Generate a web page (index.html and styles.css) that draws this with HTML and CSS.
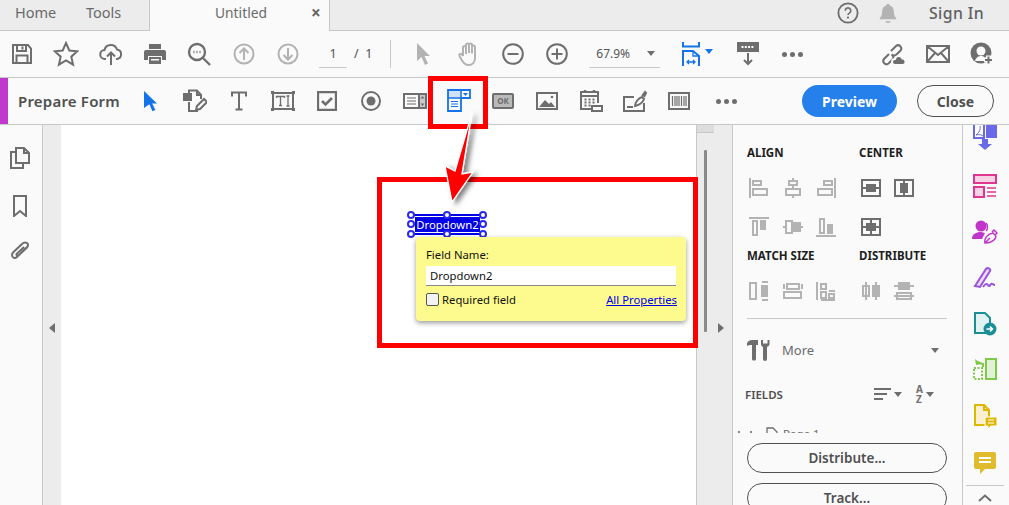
FILE: index.html
```html
<!DOCTYPE html>
<html lang="en">
<head>
<meta charset="utf-8">
<title>Prepare Form</title>
<link rel="stylesheet" href="styles.css">
</head>
<body>
<div class="app">
  <header class="tabs">
    <a class="tab">Home</a>
    <a class="tab tools">Tools</a>
    <div class="doc-tab"><span class="doc-name">Untitled</span><span class="doc-x">×</span></div>
    <div class="tabs-right">
      <svg class="help" width="22" height="22" viewBox="0 0 24 24"><circle cx="12" cy="12" r="10.500" fill="none" stroke="#6e6e6e" stroke-width="2"/><path d="M9 9.500a3 3 0 1 1 4.500 2.600c-1 .6-1.500 1.100-1.500 2.200" fill="none" stroke="#6e6e6e" stroke-width="1.800"/><circle cx="12" cy="17" r="1.200" fill="#6e6e6e"/></svg>
      <svg class="bell" width="20" height="22" viewBox="0 0 22 24"><path d="M11 2c1.200 0 2 .7 2 1.800 3.200 1 4.500 3.500 4.500 7 0 3.500 1 5.200 2.500 6.700v1.500H2v-1.500c1.500-1.500 2.500-3.200 2.500-6.700 0-3.500 1.300-6 4.500-7C9 2.700 9.800 2 11 2z" fill="#b3b3b3"/><path d="M8 21h6a3 2 0 0 1-6 0z" fill="#b3b3b3"/></svg>
      <span class="signin">Sign In</span>
    </div>
  </header>

  <nav class="toolbar">
    <div class="cell"><svg width="24" height="24" viewBox="0 0 24 24" class="ic"><path d="M3 3h15l3 3.500V21H3z"/><path d="M7 3v6h9V3M6.500 21v-7.500h11V21"/><path d="M12.500 4.500v3" /></svg></div>
    <div class="cell"><svg width="26" height="26" viewBox="0 0 26 26" class="ic"><path d="M13 2l3.300 7.500 8 .8-6 5.400 1.800 8L13 19.500l-7.100 4.200 1.800-8-6-5.400 8-.8z"/></svg></div>
    <div class="cell"><svg width="24" height="24" viewBox="0 0 24 24" class="ic"><path d="M7 17H6a4.500 4.500 0 0 1-.5-9A6.500 6.500 0 0 1 18 7.500a4.800 4.800 0 0 1 0 9.500h-1"/><path d="M12 23V11M8 14.500l4-4 4 4"/></svg></div>
    <div class="cell"><svg width="24" height="24" viewBox="0 0 24 24" class="icf"><path d="M6 2h12v5H6z"/><path d="M3 8h18a2 2 0 0 1 2 2v8h-4v-4H5v4H1v-8a2 2 0 0 1 2-2z"/><path d="M6 15h12v7H6zM8 17v1.500h8V17z" fill-rule="evenodd"/></svg></div>
    <div class="cell"><svg width="24" height="24" viewBox="0 0 24 24" class="ic ic-heavy"><circle cx="10" cy="10" r="8"/><path d="M16 16l7 7"/><path d="M6.500 10h1M9.500 10h1M12.500 10h1"/></svg></div>
    <div class="cell"><svg width="22" height="22" viewBox="0 0 22 22" class="ic dis"><circle cx="11" cy="11" r="9.500"/><path d="M11 17V5.500M6.500 10L11 5.500 15.500 10"/></svg></div>
    <div class="cell"><svg width="22" height="22" viewBox="0 0 22 22" class="ic dis"><circle cx="11" cy="11" r="9.500"/><path d="M11 5v11.500M6.500 12l4.500 4.500 4.500-4.500"/></svg></div>
    <div class="page-box"><span class="page-now">1</span><span class="page-of">/ &nbsp;1</span></div>
    <div class="sep"></div>
    <div class="cell"><svg width="18" height="24" viewBox="0 0 18 24" class="icf dis-f"><path d="M2 1l13 13H9.500l3.500 7.500-3 1.500-3.500-8L2 19z"/></svg></div>
    <div class="cell"><svg width="24" height="26" viewBox="0 0 24 26" class="ic dis"><path d="M6 15V6.500a1.500 1.500 0 0 1 3 0V13M9 12V4a1.500 1.500 0 0 1 3 0v8M12 12V4a1.500 1.500 0 0 1 3 0v8M15 12.500V6a1.500 1.500 0 0 1 3 0v11c0 4-2.500 7-6.500 7-3.500 0-5-2-6.500-4.500L2.500 15c-1-1.500 1-3 2.500-1.500L6 15"/></svg></div>
    <div class="cell"><svg width="22" height="22" viewBox="0 0 22 22" class="ic"><circle cx="11" cy="11" r="9.800"/><path d="M5.500 11h11"/></svg></div>
    <div class="cell"><svg width="22" height="22" viewBox="0 0 22 22" class="ic"><circle cx="11" cy="11" r="9.800"/><path d="M5.500 11h11M11 5.500v11"/></svg></div>
    <div class="zoom-box"><span>67.9%</span><i class="caret"></i></div>
    <div class="fit"><svg width="18" height="24" viewBox="0 0 18 24" class="ic blue"><path d="M1 0v4.500h16V0M1 24V9h10l6 5v10"/><path d="M11 9v5h6M5 20h8M7 18l-2 2 2 2M11 18l2 2-2 2" stroke-width="1.300"/></svg><i class="caret blue-caret"></i></div>
    <div class="cell dl"><svg width="24" height="24" viewBox="0 0 24 24" class="ic"><path d="M2 1h20v8H2z" fill="#6e6e6e"/><path d="M5.500 5h13" stroke="#fff" stroke-dasharray="2 1.300"/><path d="M12 11v11M8 18l4 4 4-4"/></svg></div>
    <div class="dots top-dots"><b></b><b></b><b></b></div>
    <div class="toolbar-right">
      <div class="cell"><svg width="26" height="24" viewBox="0 0 26 24" class="ic"><path d="M9 12l-5 5a3.200 3.200 0 0 0 4.500 4.500l4-4a3.200 3.200 0 0 0-1-5M11 9l5-5a3.200 3.200 0 0 1 4.500 4.500l-4 4a3.200 3.200 0 0 1-4 .5"/><path d="M15 23a3 3 0 0 1 0-6 4 4 0 0 1 7.500-.5 3.300 3.300 0 0 1 .5 6.500z" fill="#6e6e6e" stroke="#fafafa"/></svg></div>
      <div class="cell"><svg width="24" height="20" viewBox="0 0 24 20" class="ic"><path d="M1 2h22v16H1zM1 2l11 9 11-9M1 18l8-9M23 18l-8-9"/></svg></div>
      <div class="cell"><svg width="24" height="24" viewBox="0 0 24 24"><circle cx="11" cy="11" r="10.500" fill="#6e6e6e"/><circle cx="11" cy="9" r="4.500" fill="#fafafa"/><path d="M5 19c1-4 4-5 6-5s5 1 6 5" fill="#fafafa"/><path d="M14 18h9M18.500 13.500v9" stroke="#fafafa" stroke-width="5"/><path d="M15 18h7M18.500 14.500v7" stroke="#6e6e6e" stroke-width="2"/></svg></div>
    </div>
  </nav>

  <section class="formbar">
    <div class="formbar-accent"></div>
    <h1 class="formbar-title">Prepare Form</h1>
    <div class="formtools">
      <div class="tool"><svg width="16" height="22" viewBox="0 0 16 22"><path d="M1 1l13 12.500H9.200l3.200 6.500-3 1.300-3-7L1 18z" fill="#1473e6"/></svg></div>
      <div class="tool"><svg width="24" height="24" viewBox="0 0 24 24" class="ic"><path d="M6 5V1.500h8l4 4.500v4M6 13v9h9"/><path d="M14 1.500V6h4"/><path d="M1 5h7v6H1z" fill="#6e6e6e"/><path d="M13 21l1-4 7-7 3 3-7 7z"/></svg></div>
      <div class="tool"><svg width="18" height="20" viewBox="0 0 18 20" class="ic"><path d="M2 5.500V1.500h14v4M9 1.500V18.500M5.500 18.500h7"/></svg></div>
      <div class="tool"><svg width="24" height="20" viewBox="0 0 24 20" class="ic"><path d="M2 2h20v16H2z"/><path d="M5.500 7V5.500h8V7M9.500 5.500v9M8 14.500h3M15.500 5h3M17 5v10M15.500 15h3" stroke-width="1.300"/><path d="M0 0h3v3H0zM21 0h3v3h-3zM0 17h3v3H0zM21 17h3v3h-3z" fill="#6e6e6e" stroke="none"/></svg></div>
      <div class="tool"><svg width="20" height="20" viewBox="0 0 20 20" class="ic ic-heavy"><path d="M1 1h18v18H1z"/><path d="M5 10l3.500 3.500L15 7" stroke-width="2.600"/></svg></div>
      <div class="tool"><svg width="20" height="20" viewBox="0 0 20 20"><circle cx="10" cy="10" r="9" fill="none" stroke="#6e6e6e" stroke-width="2"/><circle cx="10" cy="10" r="4.500" fill="#6e6e6e"/></svg></div>
      <div class="tool"><svg width="24" height="16" viewBox="0 0 24 16" class="ic"><path d="M16 1h7v14h-7z" fill="#c9c9c9" stroke="none"/><path d="M1 1h22v14H1zM16 1v14"/><path d="M4 5h9M4 8h9M4 11h9" stroke-width="1.200"/><path d="M19.500 3l2 2.500h-4zM19.500 13l-2-2.500h4z" fill="#6e6e6e" stroke="none"/></svg></div>
      <div class="tool"><svg width="24" height="24" viewBox="0 0 24 24"><path d="M1 1h13v8H1z" fill="#cfe2f8"/><path d="M1 1h22v8H14v13H1z" fill="none" stroke="#1473e6" stroke-width="1.800"/><path d="M14 1v8M1 9h13" stroke="#1473e6" stroke-width="1.500" fill="none"/><path d="M16 4h5l-2.500 3z" fill="#1473e6"/><path d="M4 12.500h7M4 15h7M4 17.500h7" stroke="#1473e6" stroke-width="1.200"/></svg></div>
      <div class="tool"><span class="ok-btn">OK</span></div>
      <div class="tool"><svg width="22" height="18" viewBox="0 0 22 18"><path d="M1 1h20v16H1z" fill="none" stroke="#6e6e6e" stroke-width="2"/><path d="M3 15l6-7 4 4 2-2 4 5z" fill="#6e6e6e"/><circle cx="16" cy="5" r="1.300" fill="#6e6e6e"/></svg></div>
      <div class="tool"><svg width="24" height="24" viewBox="0 0 24 24" class="ic"><path d="M15 20H2V3h17v11"/><path d="M6 1v3M15 1v3" stroke-width="2.500"/><path d="M2 7h17" stroke-width="2"/><path d="M5.500 10.500h2M9.500 10.500h2M13.500 10.500h2M5.500 13.500h2M9.500 13.500h2M13.500 13.500h2M5.500 16.500h2M9.500 16.500h2" stroke-width="2"/><path d="M13 17h10v5H13z" fill="#fafafa"/></svg></div>
      <div class="tool"><svg width="24" height="22" viewBox="0 0 24 22" class="ic"><path d="M11 7H1v14h20V13"/><path d="M4 17h6"/><path d="M12 16c0-3 3-8 7-9l2 2c-1 3-5 6-9 7zM19 6l3-4 1 1-2 4" /></svg></div>
      <div class="tool"><svg width="22" height="18" viewBox="0 0 22 18"><path d="M1 1h20v16H1z" fill="none" stroke="#6e6e6e" stroke-width="2"/><path d="M4.500 4v10M7 4v10M9 4v10M11 4v10M13.500 4v10M16 4v10M18 4v10" stroke="#6e6e6e" stroke-width="1.200"/></svg></div>
      <div class="dots form-dots"><b></b><b></b><b></b></div>
    </div>
    <button class="btn-preview">Preview</button>
    <button class="btn-close">Close</button>
  </section>

  <main class="workspace">
    <aside class="leftrail">
      <svg width="20" height="22" viewBox="0 0 20 22" class="ic"><path d="M6 4V1h8l5 5v10h-5"/><path d="M14 1v5h5"/><path d="M6 5H1v16h12v-5"/><path d="M6 4v12h8" /></svg>
      <svg width="14" height="22" viewBox="0 0 14 22" class="ic"><path d="M1 1h12v20l-6-5-6 5z"/></svg>
      <svg class="clip" width="20" height="22" viewBox="0 0 20 22"><path d="M17 7L7 17c-2 2-5 1-5-2 0-1 .5-2 1.500-3L12 4c2-2 6-2 6 1 0 1-.5 2-1.500 3L9 15c-1 1-3 .5-2.500-1L14 7" fill="none" stroke="#6e6e6e" stroke-width="2"/></svg>
    </aside>
    <div class="gutter-left"><i class="tri-left"></i></div>
    <div class="doc"></div>
    <div class="gutter-right">
      <div class="scroll-cap"></div>
      <div class="scroll-thumb"></div>
      <i class="tri-right"></i>
    </div>
    <aside class="panel">
      <div class="tool-grid">
        <h2 class="hd c3">ALIGN</h2><h2 class="hd c2">CENTER</h2>
        <svg class="g" width="20" height="20" viewBox="0 0 20 20"><path d="M1 0v20M4 3h8v4H4zM4 11h14v6H4z"/></svg>
        <svg class="g" width="20" height="20" viewBox="0 0 20 20"><path d="M10 0v3M10 7v4M10 17v3M6 3h8v4H6zM3 11h14v6H3z"/></svg>
        <svg class="g" width="20" height="20" viewBox="0 0 20 20"><path d="M19 0v20M8 3h8v4H8zM2 11h14v6H2z"/></svg>
        <svg class="g on" width="20" height="18" viewBox="0 0 20 18"><path d="M1 1h18v16H1z"/><path d="M1 9h18M6 6h8v6H6z" fill="#6e6e6e"/></svg>
        <svg class="g on" width="20" height="18" viewBox="0 0 20 18"><path d="M1 1h18v16H1z"/><path d="M10 1v16M7 5h6v8H7z" fill="#6e6e6e"/></svg>
        <svg class="g" width="20" height="20" viewBox="0 0 20 20"><path d="M0 1h20M4 4h4v14H4zM12 4h4v8h-4z"/><path d="M12 4h4v8h-4z" fill="#b3b3b3"/></svg>
        <svg class="g" width="20" height="20" viewBox="0 0 20 20"><path d="M0 10h3M17 10h3M9 10h2M3 4h6v12H3zM11 6h6v8h-6z"/><path d="M11 6h6v8h-6z" fill="#b3b3b3"/></svg>
        <svg class="g" width="20" height="20" viewBox="0 0 20 20"><path d="M0 19h20M4 2h4v14H4zM12 8h4v8h-4z"/><path d="M12 8h4v8h-4z" fill="#b3b3b3"/></svg>
        <svg class="g on" width="20" height="18" viewBox="0 0 20 18"><path d="M1 1h18v16H1z"/><path d="M1 9h18M10 1v16M6 6h8v6H6z" fill="#6e6e6e"/></svg>
        <i class="g-empty"></i>
        <h2 class="hd c3 hd2">MATCH SIZE</h2><h2 class="hd c2 hd2">DISTRIBUTE</h2>
        <svg class="g" width="20" height="20" viewBox="0 0 20 20"><path d="M1 2h6v16H1zM13 1h6M13 19h6M13 5h5v10h-5z"/><path d="M13 5h5v10h-5z" fill="#b3b3b3"/></svg>
        <svg class="g" width="20" height="20" viewBox="0 0 20 20"><path d="M1 11h17v6H1zM1 3v5M19 3v5M4 3h12v5H4z"/></svg>
        <svg class="g" width="20" height="20" viewBox="0 0 20 20"><path d="M1 1v18M19 19H5M5 3h5v5H5zM5 11h5v6H5zM13 10h6M13 13h5v4h-5z"/></svg>
        <svg class="g" width="20" height="20" viewBox="0 0 20 20"><path d="M5 1v18M15 1v18M2 5h6v10H2zM12 5h6v10h-6z"/><path d="M12 5h6v10h-6z" fill="#b3b3b3"/></svg>
        <svg class="g" width="20" height="20" viewBox="0 0 20 20"><path d="M0 5h20M0 15h20M5 2h10v6H5zM3 12h14v6H3z"/><path d="M5 2h10v6H5z" fill="#b3b3b3"/></svg>
      </div>
      <div class="more-row">
        <svg width="24" height="22" viewBox="0 0 24 22"><path d="M0 4c1-2 3-3 5-3h6v5H9v14a1.500 1.500 0 0 1-1.500 1.500h-1A1.500 1.500 0 0 1 5 20V6C3 6 1 6 0 7z" fill="#6e6e6e"/><path d="M14 1v4c0 1.500 1 2.500 2 3v12a2 2 0 0 0 4 0V8c1-.5 2.500-1.500 2.500-3V1l-2 0v3.500h-4.500V1z" fill="#6e6e6e"/></svg>
        <span class="more-label">More</span>
        <i class="caret more-caret"></i>
      </div>
      <div class="fields-row">
        <span class="fields-title">FIELDS</span>
        <svg class="sort" width="18" height="14" viewBox="0 0 18 14"><path d="M0 2h17M0 7h13M0 12h9" stroke="#6e6e6e" stroke-width="1.800"/></svg><i class="caret sm"></i>
        <span class="az"><span class="az-l">A</span><span class="az-l">Z</span></span><i class="caret sm"></i>
      </div>
      <div class="tree"><span class="tree-tw"><i></i><i></i></span><svg width="12" height="14" viewBox="0 0 12 14"><path d="M1 1h6l4 4v8H1z" fill="none" stroke="#6e6e6e" stroke-width="1.300"/></svg><span>Page 1</span></div>
      <button class="pill">Distribute...</button>
      <button class="pill">Track...</button>
    </aside>
    <aside class="rightrail">
      <svg class="first" width="26" height="30" viewBox="0 0 26 30"><path d="M2 1h10v16H2z" fill="#fff" stroke="#6a6ae8" stroke-width="2"/><path d="M4 14c3-2 5-6 4-9M4 14c3-1 6 0 7 1" fill="none" stroke="#6a6ae8"/><path d="M14 0h11v17H14z" fill="#6a6ae8"/><path d="M10 18v5H6l7 6 7-6h-4v-5z" fill="#6a6ae8"/></svg>
      <svg width="24" height="24" viewBox="0 0 24 24"><path d="M1 1h22v8H1zM1 13h10v10H1z" fill="#f5d3e5" stroke="#e0368e" stroke-width="2"/><path d="M14 14h9M14 18h9M14 22h9" stroke="#e0368e" stroke-width="1.300"/></svg>
      <svg width="26" height="24" viewBox="0 0 26 24"><circle cx="9" cy="6" r="5.500" fill="#c035c9"/><path d="M0 19c0-5 4-7 9-7l4 1-3 6z" fill="#c035c9"/><path d="M14 3c2 2 2 6 0 8" fill="none" stroke="#c035c9" stroke-width="1.500"/><path d="M13 23c-1-4 2-9 8-10l3 3c0 3-4 7-11 7zM20 12l2-2 3 3-2 2M13 23l5-5" fill="none" stroke="#c035c9" stroke-width="1.500"/></svg>
      <svg width="24" height="24" viewBox="0 0 24 24"><path d="M2 20L13 3c2-2 5 0 4 2L7 21z" fill="#e9d8f7" stroke="#9b54dc" stroke-width="2"/><path d="M10 21c2-3 4-4 5-2 1 2 2 1 3-1 1-1 2 1 4 1" fill="none" stroke="#9b54dc" stroke-width="2"/></svg>
      <svg width="24" height="24" viewBox="0 0 24 24"><path d="M2 1h10l5 5v15H2z" fill="#e2f1f1" stroke="#1b8e96" stroke-width="2"/><circle cx="17" cy="17" r="6.500" fill="#1b8e96"/><path d="M13.500 17h6M17 14.500l2.500 2.500-2.500 2.500" stroke="#fff" stroke-width="1.500" fill="none"/></svg>
      <svg width="24" height="24" viewBox="0 0 24 24"><path d="M13 1h10v20H13z" fill="#e3f2d7" stroke="#7fc94a" stroke-width="2"/><path d="M1 10h8v11H1z" fill="none" stroke="#7fc94a" stroke-width="2" stroke-dasharray="2 1.500"/><path d="M2 1l1 6 6-1z" fill="#7fc94a"/><path d="M4 4l6 2v3" stroke="#7fc94a" stroke-width="2" fill="none"/></svg>
      <svg width="24" height="26" viewBox="0 0 24 26"><path d="M2 1h9l5 5v15H2z" fill="#faf0cf" stroke="#deb800" stroke-width="2"/><path d="M11 1v5h5" fill="none" stroke="#deb800" stroke-width="2"/><path d="M12 13h12v9h-6l-3 3v-3h-3z" fill="#deb800" stroke="#fff"/><path d="M15 16h6M15 19h6" stroke="#fff"/></svg>
      <svg width="22" height="22" viewBox="0 0 22 22"><path d="M2 0h18a2 2 0 0 1 2 2v13a2 2 0 0 1-2 2h-9l-5 5v-5H2a2 2 0 0 1-2-2V2a2 2 0 0 1 2-2z" fill="#e0bb2e"/><path d="M5 6h12M5 10h12" stroke="#fff" stroke-width="2"/></svg>
      <div class="rail-foot"><svg width="14" height="8" viewBox="0 0 14 8"><path d="M1 7l6-5.500L13 7" fill="none" stroke="#6e6e6e" stroke-width="2"/></svg></div>
    </aside>
  </main>

  <div class="redbox redbox-tool"></div>
  <div class="redbox redbox-field"></div>
  <svg class="arrow" width="60" height="110" viewBox="0 0 60 110"><defs><filter id="sh" x="-40%" y="-20%" width="200%" height="150%"><feDropShadow dx="4" dy="2" stdDeviation="2.500" flood-color="#000" flood-opacity=".5"/></filter></defs><path d="M41 3L31 64 42 62 21 92 14 56 24 61z" fill="#f00" stroke="#fff" stroke-width="1.300" filter="url(#sh)"/></svg>
  <div class="field"><span class="field-text">Dropdown2</span>
    <i class="h h1"></i><i class="h h2"></i><i class="h h3"></i><i class="h h4"></i><i class="h h5"></i><i class="h h6"></i><i class="h h7"></i><i class="h h8"></i>
  </div>
  <div class="popup">
    <label class="pop-label">Field Name:</label>
    <div class="pop-input">Dropdown2</div>
    <div class="pop-row"><span class="chk"></span><span>Required field</span><a class="pop-link">All Properties</a></div>
  </div>
</div>
</body>
</html>
```
FILE: styles.css
```css
* { box-sizing: border-box; }
html, body { margin: 0; padding: 0; }
body { width: 1009px; height: 505px; overflow: hidden; background: #fafafa; font-family: "Noto Sans", "Open Sans", sans-serif; color: #505050; }
.app { position: relative; width: 1009px; height: 505px; overflow: hidden; display: flex; flex-direction: column; }
svg { display: block; flex: none; }
.ic { fill: none; stroke: #6e6e6e; stroke-width: 2; }
.ic-heavy { stroke-width: 2.300; }
.icf { fill: #6e6e6e; }
.dis { stroke: #b3b3b3; }
.dis-f { fill: #b3b3b3; }
.blue { stroke: #1473e6; stroke-width: 2; }

.tabs { height: 31px; flex: none; display: flex; align-items: center; background: #ececec; border-bottom: 1px solid #c8c8c8; font-size: 14.500px; color: #6a6a6a; }
.tab { padding-left: 15px; width: 86px; flex: none; margin-top: -6px; }
.tab.tools { padding-left: 0; width: 63px; }
.doc-tab { width: 181px; height: 31px; background: #fafafa; border: 1px solid #c8c8c8; border-top: 0; border-bottom: 0; display: flex; align-items: center; flex: none; padding-bottom: 5px; }
.doc-name { margin-left: 65px; width: 96px; font-size: 13.800px; }
.doc-x { font-size: 17px; font-weight: 700; color: #666; line-height: 1; }
.tabs-right { margin-left: auto; display: flex; align-items: center; margin-top: -5px; }
.help { margin-right: 19px; }
.bell { margin-right: 31px; }
.signin { font-size: 15.800px; font-weight: 500; margin-right: 25px; letter-spacing: .4px; color: #606060; }

.toolbar { height: 47px; flex: none; display: flex; align-items: center; border-bottom: 1px solid #c8c8c8; background: #fafafa; }
.cell { width: 44.300px; height: 46px; flex: none; display: flex; align-items: center; justify-content: center; }
.page-box { width: 80px; flex: none; font-size: 12.500px; color: #505050; display: flex; }
.page-now { width: 28px; margin-left: 9px; text-align: center; height: 27px; line-height: 25px; border-bottom: 1px solid #c8c8c8; color: #555; }
.page-of { margin-left: 7px; line-height: 25px; }
.sep { width: 1px; height: 28px; background: #c8c8c8; margin-right: 11px; flex: none; }
.zoom-box { margin-left: 10px; width: 71px; height: 27px; border-bottom: 1px solid #c8c8c8; display: flex; align-items: center; font-size: 12px; color: #555; flex: none; padding-left: 7px; }
.caret { display: block; width: 0; height: 0; border-left: 4px solid transparent; border-right: 4px solid transparent; border-top: 5px solid #6e6e6e; flex: none; }
.zoom-box .caret { margin-left: 17px; }
.fit { display: flex; align-items: center; margin-left: 22px; width: 36px; flex: none; }
.blue-caret { border-top-color: #1473e6; margin-left: 5px; margin-top: -6px; }
.dl { margin-left: 8px; }
.dots { display: flex; gap: 3px; }
.dots b { width: 5px; height: 5px; border-radius: 50%; background: #6e6e6e; display: block; }
.top-dots { margin-left: 11px; }
.toolbar-right { margin-left: auto; display: flex; padding-right: 5px; }

.formbar { height: 47px; flex: none; display: flex; align-items: center; border-bottom: 1px solid #c8c8c8; background: #fafafa; }
.formbar-accent { width: 8px; height: 46px; background: #c038cc; flex: none; }
.formbar-title { margin: 0 0 0 10px; width: 111px; font-size: 15px; font-weight: 600; color: #505050; white-space: nowrap; letter-spacing: .2px; flex: none; }
.formtools { display: flex; align-items: center; width: 673px; flex: none; }
.tool { width: 44px; height: 46px; flex: none; display: flex; align-items: center; justify-content: center; }
.form-dots { margin-left: 15px; }
.ok-btn { display: block; width: 22px; height: 16px; background: #b9b9b9; border: 2px solid #6e6e6e; border-radius: 2px; color: #6e6e6e; font-size: 8px; font-weight: 700; line-height: 12px; text-align: center; }
.btn-preview { width: 95px; height: 32px; border: 0; border-radius: 16px; background: #2680eb; color: #fff; font: 700 14px "Noto Sans", sans-serif; flex: none; padding: 0; }
.btn-close { width: 77px; height: 32px; margin-left: 20px; border: 1.500px solid #505050; border-radius: 16px; background: #fafafa; color: #505050; font: 700 14px "Noto Sans", sans-serif; flex: none; padding: 0; }

.workspace { flex: 1; min-height: 0; display: flex; overflow: hidden; }
.leftrail { width: 43px; flex: none; border-right: 1px solid #c8c8c8; display: flex; flex-direction: column; align-items: center; gap: 26px; padding-top: 22px; padding-right: 3px; background: #fafafa; }
.clip { margin-top: -3px; }
.gutter-left { width: 18px; flex: none; background: #ececec; position: relative; display: flex; justify-content: center; padding-top: 198px; }
.tri-left { display: block; width: 0; height: 0; border-top: 5px solid transparent; border-bottom: 5px solid transparent; border-right: 6px solid #6e6e6e; }
.doc { width: 635px; flex: none; background: #fff; }
.gutter-right { width: 36px; flex: none; background: #ececec; border-left: 1px solid #c8c8c8; position: relative; }
.scroll-cap { width: 17px; height: 8px; background: #ddd; border-bottom: 1px solid #c8c8c8; }
.scroll-thumb { width: 3px; height: 182px; background: #8a8a8a; margin: 17px 0 0 7px; border-radius: 1px; }
.tri-right { display: block; width: 0; height: 0; border-top: 5px solid transparent; border-bottom: 5px solid transparent; border-left: 6px solid #6e6e6e; margin: -9px 0 0 21px; }

.panel { width: 231px; flex: none; border-left: 1px solid #c8c8c8; border-right: 1px solid #c8c8c8; background: #fafafa; padding: 0 14px; overflow: hidden; }
.tool-grid { display: grid; grid-template-columns: 34px 33px 45px 33px 33px; grid-template-rows: 24px 38px 40px 25px 38px; justify-content: start; align-items: center; justify-items: start; padding: 20px 0 8px 2px; border-bottom: 1px solid #c8c8c8; width: 200px; }
.hd { margin: 0 0 0 -2px; font-size: 11.500px; font-weight: 700; color: #1e1e1e; line-height: 16px; align-self: start; white-space: nowrap; }
.hd2 { margin-top: 1px; }
.c3 { grid-column: span 3; }
.c2 { grid-column: span 2; }
.g { fill: none; stroke: #b3b3b3; stroke-width: 2; }
.g.on { stroke: #6e6e6e; }
.more-row { display: flex; align-items: center; height: 44px; margin-top: 9px; }
.more-label { margin-left: 11px; font-size: 13px; color: #6a6a6a; }
.more-caret { margin-left: auto; margin-right: 9px; }
.fields-row { display: flex; align-items: center; height: 34px; margin-left: -2px; margin-top: 5px; }
.fields-title { font-size: 11.500px; font-weight: 600; width: 132px; color: #505050; }
.sort { margin-right: 1px; }
.sm { margin-right: 14px; margin-left: 1px; }
.az { display: flex; flex-direction: column; font-size: 10px; font-weight: 700; color: #6e6e6e; margin-right: 2px; }
.az-l { line-height: 10px; height: 10px; }
.tree { height: 6px; overflow: hidden; display: flex; gap: 5px; font-size: 11.500px; color: #666; margin: 16px -14px 0 -14px; padding-left: 5px; align-items: flex-start; line-height: 14px; }
.tree-tw { display: flex; gap: 10px; width: 20px; align-items: flex-end; height: 6px; margin-right: 3px; }
.tree-tw i { display: block; width: 2px; height: 2px; background: #888; }
.pill { display: block; width: 200px; height: 30px; border: 1.500px solid #505050; border-radius: 15px; background: #fafafa; font: 600 13.500px "Noto Sans", sans-serif; color: #505050; padding: 0; margin: 0 0 10px 0; }
.tree + .pill { margin-top: 10px; }

.rightrail { flex: 1; background: #fafafa; display: flex; flex-direction: column; align-items: center; overflow: hidden; padding-right: 2px; }
.rightrail > svg { margin-bottom: 22px; }
.rightrail > svg.first { margin-top: -4px; margin-bottom: 23px; }
.rail-foot { width: 38px; border-top: 1px solid #c8c8c8; margin-top: -11px; padding-top: 8px; display: flex; justify-content: center; flex: none; }

.redbox { position: absolute; border: 5px solid #f00; }
.redbox-tool { left: 428px; top: 76px; width: 60px; height: 53px; }
.redbox-field { left: 377px; top: 177px; width: 321px; height: 171px; }
.arrow { position: absolute; left: 431px; top: 110px; }
.field { position: absolute; left: 414px; top: 214px; width: 67px; height: 21px; background: #0000e6; display: flex; align-items: center; justify-content: center; }
.field-text { color: #fff; font-size: 11.300px; line-height: 15px; outline: 1px solid #fff; padding: 0 1px; white-space: nowrap; }
.h { position: absolute; width: 8px; height: 8px; border: 2px solid #2a2ae8; border-radius: 50%; background: #fff; }
.h1 { left: -7px; top: -3px; }
.h2 { left: 29px; top: -3px; }
.h3 { left: 65px; top: -3px; }
.h4 { left: -7px; top: 6px; }
.h5 { left: 65px; top: 6px; }
.h6 { left: -7px; top: 16px; }
.h7 { left: 29px; top: 16px; }
.h8 { left: 65px; top: 16px; }
.popup { position: absolute; left: 416px; top: 237px; width: 270px; height: 84px; background: #fdfb8e; border-radius: 4px; box-shadow: 0 2px 5px rgba(0,0,0,.4); padding: 10px; color: #111; font-size: 11.300px; }
.pop-label { display: block; line-height: 16px; }
.pop-input { height: 20px; width: 250px; margin-top: 3px; background: #fff; border-bottom: 1px solid #888; line-height: 19px; padding-left: 4px; }
.pop-row { display: flex; align-items: center; margin-top: 4px; height: 18px; }
.chk { width: 13px; height: 13px; border: 1px solid #555; border-radius: 2px; background: #f3f3f3; margin-right: 3px; }
.pop-link { margin-left: auto; color: #0000e6; text-decoration: underline; margin-right: -1px; }
```
